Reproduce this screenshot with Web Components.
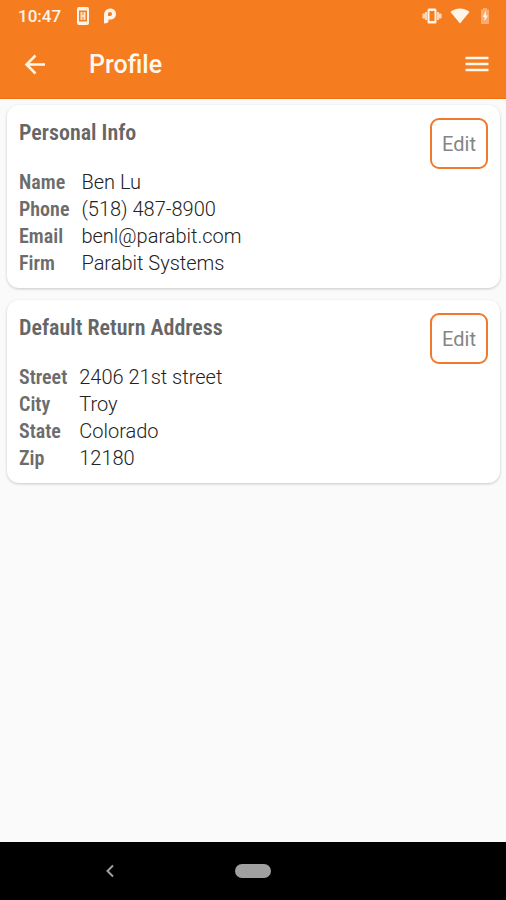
<!DOCTYPE html>
<html lang="en">
<head>
<meta charset="utf-8">
<meta name="viewport" content="width=device-width, initial-scale=1">
<title>Profile</title>
<style>
html, body { height: 100%; margin: 0; }
body {
  --accent: #f57c1f;
  --condensed: "Roboto Condensed", "Liberation Sans Narrow", Roboto, sans-serif;
  font-family: Roboto, sans-serif;
  background: #fafafa;
}
</style>
</head>
<body>
<profile-screen>
  <status-bar slot="top" time="10:47"></status-bar>
  <app-bar slot="top">Profile</app-bar>
  <info-card>
    <span slot="title">Personal Info</span>
    <dt>Name</dt><dd>Ben Lu</dd>
    <dt>Phone</dt><dd>(518) 487-8900</dd>
    <dt>Email</dt><dd>benl@parabit.com</dd>
    <dt>Firm</dt><dd>Parabit Systems</dd>
  </info-card>
  <info-card>
    <span slot="title">Default Return Address</span>
    <dt>Street</dt><dd>2406 21st street</dd>
    <dt>City</dt><dd>Troy</dd>
    <dt>State</dt><dd>Colorado</dd>
    <dt>Zip</dt><dd>12180</dd>
  </info-card>
  <nav-bar slot="bottom"></nav-bar>
</profile-screen>
<script>
const define = (name, html, setup) => {
  const template = document.createElement('template');
  template.innerHTML = html;
  customElements.define(name, class extends HTMLElement {
    constructor() {
      super();
      this.attachShadow({ mode: 'open' }).append(template.content.cloneNode(true));
    }
    connectedCallback() { if (setup) setup(this); }
  });
};

define('profile-screen', `
<style>
:host { display: flex; flex-direction: column; min-height: 100%; }
header { background: var(--accent); border-bottom: 1px solid #f26f0c; }
main { flex: 1; display: flex; flex-direction: column; gap: 12px; padding: 6px 6px 12px 7px; }
</style>
<header><slot name="top"></slot></header>
<main><slot></slot></main>
<slot name="bottom"></slot>`);

define('status-bar', `
<style>
:host { display: flex; align-items: center; height: 32px; padding: 0 14px 0 18px; color: #fff4e8; }
time { font-size: 17px; line-height: 32px; font-weight: 500; margin-right: 16px; }
svg { display: block; fill: currentColor; }
.app { margin-left: 14px; }
.system { display: flex; align-items: center; gap: 8px; margin-left: auto; }
</style>
<time></time>
<svg width="12" height="18" viewBox="0 0 12 18" aria-hidden="true"><path fill-rule="evenodd" d="M2 0h8a2 2 0 0 1 2 2v14a2 2 0 0 1-2 2H2a2 2 0 0 1-2-2V2a2 2 0 0 1 2-2zM2 3.500v11h8v-11z"/><path d="M3.500 5h2v3h1V5h2v8h-2v-3h-1v3h-2z" opacity=".85"/></svg>
<svg class="app" width="14" height="16" viewBox="0 0 14 16" aria-hidden="true"><path fill-rule="evenodd" d="M1 15.500V6.500A6.200 6.200 0 0 1 7 .5c3.500 0 6 2.200 6 5.400 0 3.300-2.500 5.600-5.700 5.600H5.500v1.600C5.500 15 3.500 15.500 1 15.500zM5 8h2a2 2 0 1 0-2-2z"/></svg>
<div class="system">
<svg width="20" height="16" viewBox="0 0 20 16" aria-hidden="true"><path fill-rule="evenodd" d="M7 .5h6A1.500 1.500 0 0 1 14.500 2v12a1.500 1.500 0 0 1-1.500 1.500H7A1.500 1.500 0 0 1 5.500 14V2A1.500 1.500 0 0 1 7 .5zM7.500 3v10h5V3z"/><path d="M3 4h2v8H3zM.5 5.500H3v5H.5zM15 4h2v8h-2zM17 5.500h2.500v5H17z" opacity=".75"/></svg>
<svg width="20" height="16" viewBox="0 0 20 16" fill="#fff" aria-hidden="true"><path d="M10 15.500.5 4C3 1.700 6.200.5 10 .5s7 1.200 9.500 3.500z"/></svg>
<svg width="14" height="16" viewBox="0 0 14 16" aria-hidden="true"><path d="M5 0h4v1.500h2V16H3V1.500h2z" opacity=".4"/><path d="M8 3 4.500 9h2v4L10 7.500H8z"/></svg>
</div>`, el => { el.shadowRoot.querySelector('time').textContent = el.getAttribute('time'); });

define('app-bar', `
<style>
:host { display: flex; align-items: center; height: 66px; padding: 0 16px 0 22px; color: #fff8ee; }
button { display: block; padding: 0; border: 0; background: none; color: inherit; cursor: pointer; }
svg { display: block; fill: none; stroke: currentColor; stroke-width: 2.500; }
h1 { flex: 1; margin: 0 0 0 41px; font-size: 25px; line-height: 32px; font-weight: 500; }
</style>
<button aria-label="Back"><svg width="26" height="26" viewBox="0 0 26 26"><path d="M23 12.500H5M13.500 3.500 4.500 12.500l9 9"/></svg></button>
<h1><slot></slot></h1>
<button aria-label="Menu"><svg width="26" height="26" viewBox="0 0 26 26"><path d="M1.500 6h23M1.500 12h23M1.500 18h23"/></svg></button>`);

define('info-card', `
<style>
:host {
  display: block; padding: 13px 12px 11px; border-radius: 12px; background: #fff;
  box-shadow: 0 1px 3px rgba(0, 0, 0, .2);
}
.head { display: flex; justify-content: space-between; align-items: flex-start; }
h2 { margin: 0; padding-top: 1px; font: 600 22px/28px var(--condensed); color: #666; }
button {
  width: 58px; height: 51px; padding: 0; border: 2px solid #f07a2c; border-radius: 9px;
  background: #fff; color: #858585; font: 400 20px/24px Roboto, sans-serif; cursor: pointer;
}
dl { display: grid; grid-template-columns: auto 1fr; column-gap: 12px; margin: 0; line-height: 27px; }
::slotted(dt) { font: 600 20px/27px var(--condensed); color: #6c6c6c; }
::slotted(dd) { margin: 0; font-size: 20px; font-weight: 300; color: #222; }
</style>
<div class="head"><h2><slot name="title"></slot></h2><button>Edit</button></div>
<dl><slot></slot></dl>`);

define('nav-bar', `
<style>
:host { display: grid; grid-template-columns: 1fr auto 1fr; align-items: center; height: 58px; background: #000; color: #a0a0a0; }
button { display: block; padding: 0; border: 0; background: none; color: inherit; cursor: pointer; }
.back { justify-self: center; margin-right: 16px; }
svg { display: block; fill: none; stroke: currentColor; stroke-width: 2; }
.home { width: 36px; height: 14px; border-radius: 7px; background: currentColor; }
</style>
<button class="back" aria-label="Back"><svg width="10" height="14" viewBox="0 0 10 14"><path d="M8 1.500 2.500 7 8 12.500"/></svg></button>
<button class="home" aria-label="Home"></button>`);
</script>
</body>
</html>
